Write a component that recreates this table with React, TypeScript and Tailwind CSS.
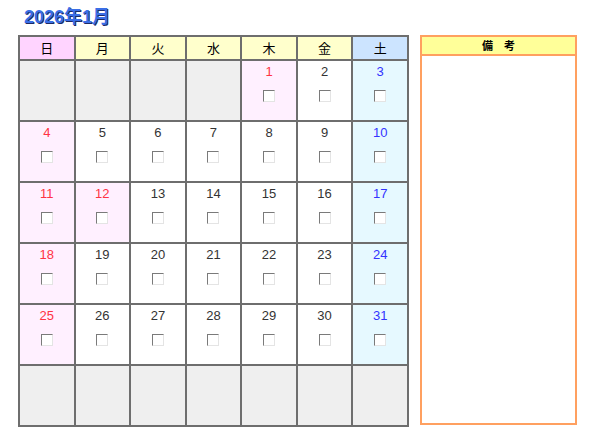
const weeks: (number | null)[][] = [
  [null, null, null, null, 1, 2, 3],
  [4, 5, 6, 7, 8, 9, 10],
  [11, 12, 13, 14, 15, 16, 17],
  [18, 19, 20, 21, 22, 23, 24],
  [25, 26, 27, 28, 29, 30, 31],
  [null, null, null, null, null, null, null],
];

const days = ["日", "月", "火", "水", "木", "金", "土"];
// 1/1 and 1/12 are holidays
const holidays = [1, 12];

const headBg = (i: number) =>
  i === 0 ? "bg-[#ffd4ff]" : i === 6 ? "bg-[#cce4ff]" : "bg-[#ffffcc]";

const Check = () => (
  <div className="mx-auto w-[12px] h-[12px] bg-white border border-t-[#7a7a7a] border-l-[#7a7a7a] border-b-[#e4e4e4] border-r-[#e4e4e4]" />
);

const DayCell = ({ d, col }: { d: number | null; col: number }) => {
  if (d === null) {
    return (
      <td className="border-2 border-[#6e6e6e] bg-[#efefef] h-[61px]" />
    );
  }
  const red = col === 0 || holidays.includes(d);
  const blue = col === 6;
  const bg = red ? "bg-[#fff0ff]" : blue ? "bg-[#e6f9ff]" : "bg-white";
  const color = red ? "text-[#ff3344]" : blue ? "text-[#3333ff]" : "text-[#333]";
  return (
    <td className={`border-2 border-[#6e6e6e] h-[61px] align-top ${bg}`}>
      <div className={`text-[13px] leading-none pt-[4px] text-center ${color}`}>{d}</div>
      <div className="pt-[12px]">
        <Check />
      </div>
    </td>
  );
};

export default function App() {
  return (
    <div
      className="w-[600px] h-[433px] bg-white relative"
      style={{ fontFamily: '"Liberation Sans", "Noto Sans CJK JP", sans-serif' }}
    >
      <div className="pl-[24px] pt-[7px] h-[35px]">
        <h1 className="text-[18px] font-bold leading-[20px] text-[#3a6ee6] [text-shadow:1px_1px_0_#1b2a66]">
          2026年1月
        </h1>
      </div>
      <div className="flex pl-[18px] gap-[11px]">
        <table className="border-collapse w-[391px] table-fixed">
          <thead>
            <tr>
              {days.map((d, i) => (
                <th
                  key={d}
                  className={`border-2 border-[#6e6e6e] h-[24px] text-[13px] font-normal text-black ${headBg(i)}`}
                  style={{ fontFamily: '"Noto Sans CJK JP", sans-serif' }}
                >
                  {d}
                </th>
              ))}
            </tr>
          </thead>
          <tbody>
            {weeks.map((w, r) => (
              <tr key={r}>
                {w.map((d, c) => (
                  <DayCell key={c} d={d} col={c} />
                ))}
              </tr>
            ))}
          </tbody>
        </table>
        <div className="w-[157px] h-[390px] border-2 border-[#ffa060] flex flex-col">
          <div
            className="h-[19px] bg-[#ffff99] border-b-2 border-[#ffa060] text-[11px] font-bold flex items-center justify-center"
            style={{ fontFamily: '"Noto Sans CJK JP", sans-serif' }}
          >
            備　考
          </div>
          <div className="flex-1" />
        </div>
      </div>
    </div>
  );
}
